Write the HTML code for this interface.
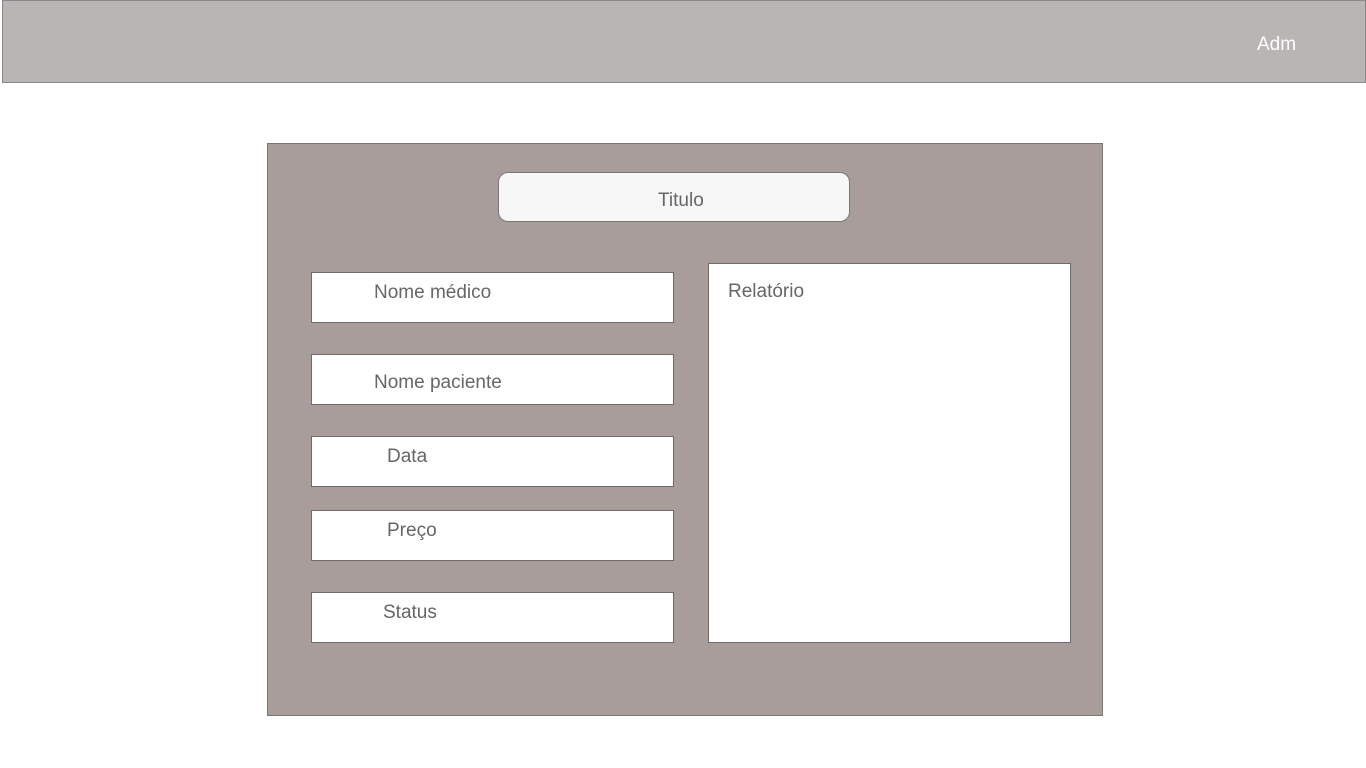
<!DOCTYPE html>
<html><head><meta charset="utf-8"><style>
body{margin:0;width:1366px;height:768px;background:#fff;position:relative;overflow:hidden;font-family:"Liberation Sans",sans-serif;}
.a{position:absolute;box-sizing:border-box;}
.f{background:#fff;border:1px solid #6e6a6a;}
.t{position:absolute;color:#666;font-size:19px;}
</style></head><body>
<div class="a" style="left:2px;top:0;width:1364px;height:83px;background:#b8b5b4;border:1px solid #888;"></div>
<div class="t" style="left:1257px;top:34px;color:#fff;">Adm</div>
<div class="a" style="left:267px;top:143px;width:836px;height:573px;background:#a99d9c;border:1px solid #777;"></div>
<div class="a" style="left:498px;top:172px;width:352px;height:50px;background:#f7f7f7;border:1px solid #777;border-radius:10px;"></div>
<div class="t" style="left:658px;top:190px;">Titulo</div>
<div class="a f" style="left:311px;top:272px;width:363px;height:51px;"></div>
<div class="t" style="left:374px;top:282px;">Nome médico</div>
<div class="a f" style="left:311px;top:354px;width:363px;height:51px;"></div>
<div class="t" style="left:374px;top:372px;">Nome paciente</div>
<div class="a f" style="left:311px;top:436px;width:363px;height:51px;"></div>
<div class="t" style="left:387px;top:446px;">Data</div>
<div class="a f" style="left:311px;top:510px;width:363px;height:51px;"></div>
<div class="t" style="left:387px;top:520px;">Preço</div>
<div class="a f" style="left:311px;top:592px;width:363px;height:51px;"></div>
<div class="t" style="left:383px;top:602px;">Status</div>
<div class="a f" style="left:708px;top:263px;width:363px;height:380px;"></div>
<div class="t" style="left:728px;top:281px;">Relatório</div>
</body></html>
